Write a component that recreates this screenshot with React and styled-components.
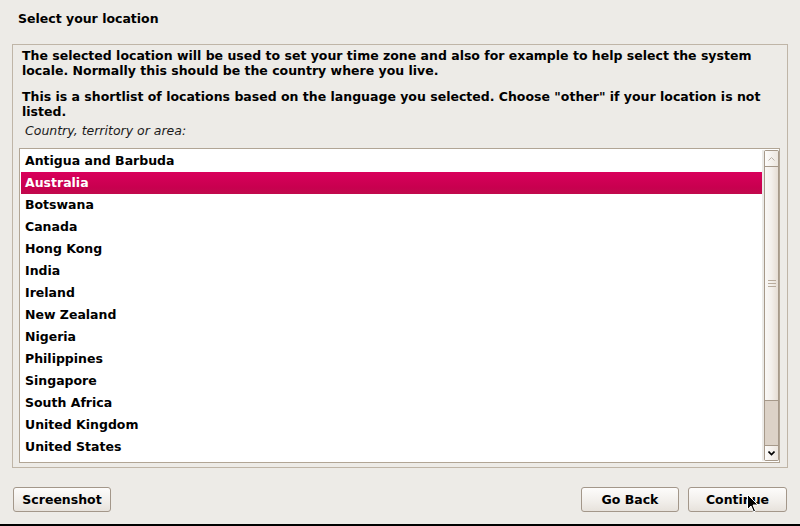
import React from "react";
import styled, { createGlobalStyle } from "styled-components";

const Global = createGlobalStyle`
  html, body { margin: 0; padding: 0; }
  body {
    background: #edebe7;
    font-family: "DejaVu Sans", "Liberation Sans", sans-serif;
    font-size: 12.5px;
    color: #000;
    overflow: hidden;
  }
`;

const Page = styled.div`
  position: relative;
  box-sizing: border-box;
  width: 800px;
  height: 526px;
  border-bottom: 2px solid #000;
  display: flex;
  flex-direction: column;
`;

const Title = styled.div`
  box-sizing: border-box;
  height: 44px;
  padding: 11px 0 0 18px;
  font-weight: bold;
  line-height: 15px;
`;

const Frame = styled.div`
  box-sizing: border-box;
  height: 424px;
  margin: 0 12px 0 12px;
  border: 1px solid #bfb5a7;
  padding: 4px 7px 4px 6px;
  display: flex;
  flex-direction: column;
`;

const Para = styled.p`
  margin: 0 0 ${(p) => p.$gap}px 3px;
  font-weight: bold;
  line-height: 14.5px;
  white-space: nowrap;
`;

const Label = styled.div`
  margin: 0 0 10px 6px;
  font-style: italic;
  line-height: 15px;
  color: #1a1a1a;
`;

const ListBox = styled.div`
  flex: 1;
  display: flex;
  border: 1px solid #b1a595;
  background: #fff;
  padding: 1px 0 1px 1px;
  min-height: 0;
`;

const Rows = styled.div`
  flex: 1;
  display: flex;
  flex-direction: column;
`;

const Row = styled.div`
  height: 22px;
  line-height: 22px;
  padding-left: 4px;
  font-weight: bold;
  color: ${(p) => (p.$selected ? "#fff" : "#000")};
  background: ${(p) =>
    p.$selected ? "linear-gradient(#d9005b, #c8004f 70%, #c00a4c)" : "transparent"};
`;

const ScrollArea = styled.div`
  width: 17px;
  padding: 0 0 0 2px;
  box-sizing: border-box;
  background: #ecebe8;
  display: flex;
`;

const Track = styled.div`
  flex: 1;
  display: flex;
  flex-direction: column;
  border: 1px solid #a6998a;
  border-radius: 2px;
  background: #dcd2c7;
`;

const ArrowBtn = styled.div`
  height: ${(p) => p.$h}px;
  display: flex;
  align-items: center;
  justify-content: center;
  background: linear-gradient(90deg, #fdfcfb, #ece6df);
  border-${(p) => p.$edge}: 1px solid #a6998a;
`;

const Thumb = styled.div`
  height: 233px;
  display: flex;
  align-items: center;
  justify-content: center;
  background: linear-gradient(90deg, #faf8f6, #f3efeb 50%, #e6ddd4);
  border-bottom: 1px solid #a6998a;
`;

const Footer = styled.div`
  flex: 1;
  display: flex;
  align-items: flex-start;
  padding: 19px 13px 0 13px;
  gap: 9px;
`;

const Spacer = styled.div`
  flex: 1;
`;

const Button = styled.button`
  box-sizing: border-box;
  width: ${(p) => p.$w}px;
  height: 25px;
  border: 1px solid #a3978a;
  border-radius: 3px;
  background: linear-gradient(#fdfcfb, #f1eeea 60%, #e7e2dc);
  font-family: "DejaVu Sans", "Liberation Sans", sans-serif;
  font-size: 12.5px;
  font-weight: bold;
  color: #000;
  padding: 0 0 1px 0;
`;

const Cursor = styled.svg`
  position: absolute;
  left: 747px;
  top: 494px;
`;

const items = [
  "Antigua and Barbuda",
  "Australia",
  "Botswana",
  "Canada",
  "Hong Kong",
  "India",
  "Ireland",
  "New Zealand",
  "Nigeria",
  "Philippines",
  "Singapore",
  "South Africa",
  "United Kingdom",
  "United States",
];

export default function App() {
  return (
    <>
      <Global />
      <Page>
        <Title>Select your location</Title>
        <Frame>
          <Para $gap={12}>
            The selected location will be used to set your time zone and also for example to help select the system
            <br />
            locale. Normally this should be the country where you live.
          </Para>
          <Para $gap={4}>
            This is a shortlist of locations based on the language you selected. Choose "other" if your location is not
            <br />
            listed.
          </Para>
          <Label>Country, territory or area:</Label>
          <ListBox>
            <Rows>
              {items.map((it) => (
                <Row key={it} $selected={it === "Australia"}>
                  {it}
                </Row>
              ))}
            </Rows>
            <ScrollArea>
              <Track>
                <ArrowBtn $h={15} $edge="bottom">
                  <svg width="7" height="4" viewBox="0 0 7 4">
                    <path d="M0.5 3.5 L3.5 0.5 L6.5 3.5" fill="none" stroke="#b9b0a6" strokeWidth="1" />
                  </svg>
                </ArrowBtn>
                <Thumb>
                  <svg width="8" height="7" viewBox="0 0 8 7">
                    <path d="M0 0.5 H8 M0 3.5 H8 M0 6.5 H8" stroke="#b8ab9c" strokeWidth="1" />
                  </svg>
                </Thumb>
                <Spacer />
                <ArrowBtn $h={14} $edge="top">
                  <svg width="7" height="5" viewBox="0 0 7 5">
                    <path d="M0.5 0.5 L3.5 3.5 L6.5 0.5" fill="none" stroke="#000" strokeWidth="1.6" />
                  </svg>
                </ArrowBtn>
              </Track>
            </ScrollArea>
          </ListBox>
        </Frame>
        <Footer>
          <Button $w={98}>Screenshot</Button>
          <Spacer />
          <Button $w={98}>Go Back</Button>
          <Button $w={99}>Continue</Button>
        </Footer>
        <Cursor width="12" height="19" viewBox="0 0 12 19">
          <path d="M0.5 0.5 L0.5 15.5 L4 12 L6.5 18 L8.5 17 L6 11 L11 11 Z" fill="#000" stroke="#fff" strokeWidth="1" />
        </Cursor>
      </Page>
    </>
  );
}
